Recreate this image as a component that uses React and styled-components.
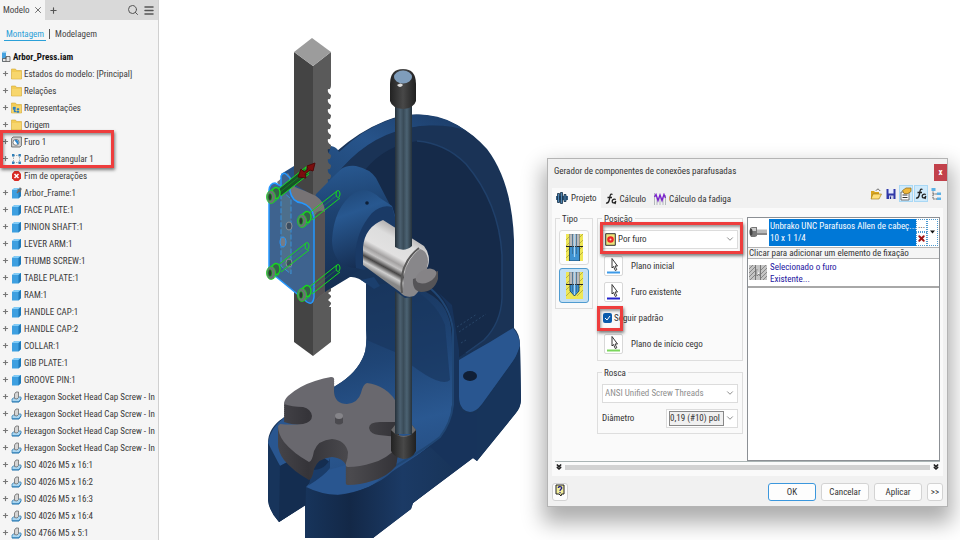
import styled, { createGlobalStyle } from "styled-components";
import { Search, Menu, Plus, X, ChevronDown, ChevronsDown } from "lucide-react";

const GlobalStyle = createGlobalStyle`
* { box-sizing: border-box; }
body {
  margin: 0;
  background-color: #fff;
  color: #333;
  font-family: "Roboto Condensed", "Open Sans Condensed", Roboto, sans-serif;
  font-size: 9px;
  line-height: 12px;
}
button, select, input { font: inherit; color: inherit; margin: 0; }
`;

const Page = styled.div`
display: flex;
align-items: stretch;
overflow: hidden;
`;

/* ---------- browser panel ---------- */

const Sidebar = styled.aside`
flex: 0 0 159px;
min-width: 0;
background-color: #f5f5f5;
border-right: 1px solid #d0d0d0;
overflow: hidden;
`;

const PanelHead = styled.div`
display: flex;
align-items: center;
height: 20px;
background-color: #d9d9d9;
color: #444;
`;

const PanelTab = styled.div`
display: flex;
align-items: center;
justify-content: space-between;
width: 45px;
height: 20px;
padding: 0 1px 0 3px;
background-color: #f5f5f5;
`;

const IconButton = styled.button`
display: flex;
align-items: center;
justify-content: center;
width: 12px;
height: 14px;
padding: 0;
border: none;
background: none;
color: #555;
`;

const AddButton = styled(IconButton)`
margin-left: 2px;
`;

const HeadTools = styled.div`
display: flex;
gap: 4px;
margin-left: auto;
padding-right: 3px;
`;

const Modes = styled.nav`
display: flex;
align-items: center;
height: 28px;
padding: 0 4px;
`;

const ModeLink = styled.a`
padding: 0 2px;
color: ${(p) => (p.$active ? "#2aa0d8" : "#444")};
border-bottom: 1px solid ${(p) => (p.$active ? "#2aa0d8" : "transparent")};
text-decoration: none;
`;

const Divider = styled.span`
width: 1px;
height: 10px;
margin: 0 3px;
background-color: #555;
`;

const Tree = styled.ul`
list-style: none;
margin: 0;
padding: 0;
`;

const TreeRow = styled.li`
display: flex;
align-items: center;
height: 17px;
padding-left: ${(p) => (p.$root ? 1 : 2)}px;
gap: 2px;
white-space: nowrap;
font-weight: ${(p) => (p.$root ? "bold" : "normal")};
color: ${(p) => (p.$root ? "#111" : "#3a3a3a")};
svg { flex: none; }
`;

const Expander = styled.span`
display: flex;
width: 7px;
color: #777;
`;

const Marked = styled.div`
position: relative;
`;

const RedBox = styled.span`
position: absolute;
top: ${(p) => p.$top}px;
left: ${(p) => p.$left}px;
width: ${(p) => p.$width}px;
height: ${(p) => p.$height}px;
border: 3px solid #ee3d3d;
box-shadow: 1px 2px 3px rgba(0, 0, 0, 0.5), inset 1px 2px 3px rgba(0, 0, 0, 0.4);
pointer-events: none;
`;

/* ---------- model view and dialog ---------- */

const Viewport = styled.main`
flex: 388 1 0;
min-width: 0;
svg { display: block; width: 100%; }
`;

const DialogSide = styled.div`
flex: 401 1 0;
min-width: 0;
padding: 158px 12px 31px 0;
`;

const Dialog = styled.section`
display: flex;
flex-direction: column;
height: 349px;
padding: 0 4px;
background-color: #f1f1f1;
border: 1px solid #b4b4b4;
box-shadow: 0 12px 20px 4px rgba(0, 0, 0, 0.32);
`;

const TitleBar = styled.header`
display: flex;
justify-content: space-between;
align-items: center;
height: 28px;
margin-right: -4px;
padding-left: 2px;
span { padding-bottom: 3px; }
`;

const CloseButton = styled.button`
width: 13px;
height: 17px;
padding: 0;
border: none;
background-color: #c2414b;
color: #fff;
font-weight: bold;
line-height: 12px;
`;

const TabStrip = styled.div`
display: flex;
align-items: flex-end;
height: 22px;
`;

const Tab = styled.button`
display: flex;
align-items: center;
gap: 3px;
height: ${(p) => (p.$active ? 20 : 18)}px;
padding: 0 4px;
border: none;
background-color: ${(p) => (p.$active ? "#fafafa" : "#f1f1f1")};
`;

const Tools = styled.div`
display: flex;
align-items: center;
gap: 1px;
margin-left: auto;
height: 22px;
padding-bottom: 6px;
`;

const Tool = styled.button`
display: flex;
align-items: center;
justify-content: center;
width: 14px;
height: 17px;
padding: 0;
border: 1px solid ${(p) => (p.$on ? "#a9d8f5" : "transparent")};
background-color: ${(p) => (p.$on ? "#cfeafb" : "transparent")};
`;

const Body = styled.div`
display: flex;
flex-direction: column;
height: 268px;
padding: 5px 3px 3px;
background-color: #fafafa;
`;

const Columns = styled.div`
display: grid;
grid-template-columns: 38px 146px minmax(0, 1fr);
column-gap: 4px;
height: 252px;
border-bottom: 1px solid #aab4b4;
`;

const Group = styled.fieldset`
min-width: 0;
margin: 0;
padding: 5px 4px 0;
border: 1px solid #dedede;
height: ${(p) => p.$height}px;
legend { padding: 0 2px; line-height: 12px; }
`;

const Settings = styled.div`
display: flex;
flex-direction: column;
gap: 6px;
`;

const TypeButton = styled.button`
display: flex;
align-items: center;
justify-content: center;
width: 30px;
height: 35px;
margin: 0 0 3px -1px;
padding: 0;
border: 1px solid ${(p) => (p.$on ? "#4f9bd0" : "#dcdcdc")};
border-radius: 3px;
background-color: ${(p) => (p.$on ? "#c3dff3" : "#fdfdfd")};
`;

const Combo = styled.div`
position: relative;
display: flex;
align-items: center;
gap: 2px;
width: ${(p) => (p.$width ? p.$width + "px" : "100%")};
height: 19px;
padding-left: 2px;
padding-right: ${(p) => (p.$boxed ? 13 : 0)}px;
border: 1px solid #dcdcdc;
background-color: #fff;
color: ${(p) => (p.$muted ? "#8f8f8f" : "#333")};
> svg:last-child { position: absolute; right: 2px; pointer-events: none; color: #777; }
select {
  flex: 1;
  min-width: 0;
  height: 15px;
  padding: 0;
  border: ${(p) => (p.$boxed ? "1px solid #888" : "none")};
  outline: none;
  appearance: none;
  background: ${(p) => (p.$boxed ? "#f0f0f0" : "transparent")};
  opacity: 1;
}
`;

const Field = styled.div`
display: flex;
align-items: center;
gap: 8px;
height: 20px;
margin-top: 6px;
padding-left: 2px;
`;

const PickButton = styled.button`
display: flex;
align-items: center;
justify-content: center;
width: 19px;
height: 20px;
padding: 0;
border: 1px solid #d8d8d8;
border-radius: 2px;
background-color: #fff;
`;

const Rows = styled.div`
padding-top: 1px;
`;

const CheckRow = styled.label`
position: relative;
display: flex;
align-items: center;
gap: 2px;
height: 20px;
margin-top: 6px;
padding-left: 1px;
input {
  appearance: none;
  width: 9px;
  height: 10px;
  border-radius: 2px;
  background-color: #0b5cad;
}
> svg { position: absolute; left: 2px; pointer-events: none; }
`;

const Pair = styled.div`
display: flex;
align-items: center;
justify-content: space-between;
margin-top: 6px;
`;

const PartList = styled.div`
height: 244px;
margin-top: 4px;
border: 1px solid #8b8f94;
background-color: #fff;
overflow: hidden;
`;

const Part = styled.div`
display: flex;
align-items: stretch;
height: 29px;
padding: 1px;
border-bottom: ${(p) => (p.$selected ? "none" : "2px solid #a8a8a8")};
`;

const PartIcon = styled.div`
display: flex;
align-items: center;
width: 20px;
`;

const PartText = styled.div`
flex: 1;
min-width: 0;
padding: 1px 0 1px 1px;
background-color: ${(p) => (p.$selected ? "#0078d7" : "#fff")};
color: ${(p) => (p.$selected ? "#fff" : "#1c14a0")};
white-space: nowrap;
`;

const PartButtons = styled.div`
display: flex;
flex-direction: column;
width: 11px;
button {
  display: flex;
  align-items: center;
  justify-content: center;
  flex: 1;
  min-height: 0;
  padding: 0;
  border: 1px dotted #4f9bd0;
  background: #fff;
  color: #111;
}
`;

const Hint = styled.div`
height: 12px;
padding-left: 1px;
border-top: 1px solid #b4b4b4;
border-bottom: 1px solid #b4b4b4;
background-color: #f5f5f5;
line-height: 10px;
white-space: nowrap;
`;

const Slide = styled.div`
display: flex;
align-items: center;
gap: 2px;
height: 11px;
color: #222;
span { flex: 1; height: 5px; background-color: #d2d2d2; }
`;

const Footer = styled.footer`
display: flex;
align-items: center;
gap: 5px;
height: 32px;
padding-top: 2px;
`;

const Button = styled.button`
width: ${(p) => (p.$small ? 16 : 48)}px;
height: 18px;
padding: 0;
border: 1px solid ${(p) => (p.$primary ? "#3b97dd" : "#d3d3d3")};
border-radius: 3px;
background-color: #fdfdfd;
&:first-of-type { margin-right: auto; }
`;

/* ---------- small icons ---------- */

const FolderIcon = ({ badge }) => (
  <svg width="11" height="12" viewBox="0 0 11 12">
    <path d="M.5 1h4l1 1.5h5V11H.5z" fill="#f3cc55" stroke="#d3a734" strokeWidth=".6" />
    <path d="M1 4h9v6.6H1z" fill="#f7d66d" />
    {badge && <path d="M2 5h2.5v2.5H2zM6 6.500h2V8H6zM6 9h2v1.500H6zM3 7v3h3" fill="#2d7fc1" stroke="#2d7fc1" strokeWidth=".4" />}
  </svg>
);

const PartCube = ({ pinned }) => (
  <svg width="11" height="12" viewBox="0 0 11 12">
    <path d="M1 3 3.500 1H10v8l-2.500 2.500H1z" fill="#3d9fe0" />
    <path d="M1 3 3.500 1H10L7.500 3z" fill="#82cbf6" />
    <path d="M7.500 3 10 1v8l-2.500 2.500z" fill="#1d78b8" />
    {pinned && <path d="M6 6 9 2.500M6.500 2.500l3.500 2M8.500.8l2 1.700" stroke="#6d6d6d" strokeWidth="1.500" />}
  </svg>
);

const ScrewIcon = () => (
  <svg width="11" height="12" viewBox="0 0 11 12">
    <path d="M1 8l3-2h6v2l-2 3H1z" fill="#a9d5f0" stroke="#3a83b5" strokeWidth=".8" />
    <path d="M3.500 7.500V3L5 1h2.500v5.500L6 8z" fill="#d5d5d5" stroke="#6c6c6c" strokeWidth=".8" />
    <path d="M1 10.800h7l2-3" fill="none" stroke="#2f7fb7" />
  </svg>
);

const HoleIcon = () => (
  <svg width="11" height="12" viewBox="0 0 11 12">
    <path d="M.6 2.500 2 1h8.400v8.500L9 11H.6z" fill="#d4d4d4" stroke="#555" strokeWidth=".8" />
    <circle cx="5" cy="6.300" r="3" fill="#fff" stroke="#666" strokeWidth=".8" />
    <path d="M5 6.300 3.500 4.500a2.500 2.500 0 1 1 3 4z" fill="#2b87cf" />
  </svg>
);

const PatternIcon = () => (
  <svg width="11" height="12" viewBox="0 0 11 12">
    <path d="M2.500 2.500h6v7h-6z" fill="none" stroke="#999" strokeDasharray="1.500 1" strokeWidth=".8" />
    <path d="M1 1h2.400v2.400H1zM7.500 1h2.400v2.400H7.500zM1 8.500h2.400v2.400H1zM7.500 8.500h2.400v2.400H7.500z" fill="#2f7fb9" />
  </svg>
);

const EndIcon = () => (
  <svg width="11" height="12" viewBox="0 0 11 12">
    <path d="M3.500 1h4L10 3.700v4.600L7.500 11h-4L1 8.300V3.700z" fill="#d92a25" />
    <path d="M3.500 4l4 4M7.500 4l-4 4" stroke="#fff" strokeWidth="1.500" />
  </svg>
);

const AssemblyIcon = () => (
  <svg width="10" height="12" viewBox="0 0 10 12">
    <path d="M1 1.500h4v9H1z" fill="#45a2df" />
    <path d="M1 1.500 2 .5h4l-1 1z" fill="#8fcff5" />
    <path d="M5 5.500h4v5H1.500v-3H5zM5 6v4.500" fill="#e4e4e4" stroke="#555" strokeWidth=".8" />
  </svg>
);

const BoltTabIcon = () => (
  <svg width="12" height="12" viewBox="0 0 12 12">
    <path d="M0 4h12v4H0z" fill="#355f86" />
    <path d="M1.500 1.500h2v9h-2zM4.500.5h2v11h-2zM8 2.500h2v7H8z" fill="#4f86b4" stroke="#132c42" strokeWidth=".8" />
  </svg>
);

const FormulaIcon = () => (
  <svg width="12" height="12" viewBox="0 0 12 12" fill="none" stroke="#222" strokeWidth="1.300">
    <path d="M7.500 1.500C5 0 5 3.500 4.500 6S3.500 10.500 1 10M2.500 4.500h4.500" />
    <path d="M10.800 6.500C8 5.500 6.800 7.500 7.300 9s3 1 3.500-1L10 11" />
  </svg>
);

const FatigueIcon = () => (
  <svg width="12" height="12" viewBox="0 0 12 12">
    <path d="M.5 0v12M3 5v7M6 5v7M9 5v7M11.500 2v10" stroke="#9aa0a5" strokeWidth=".7" />
    <path d="M.5 4 2 1.500 4 7.500 6 2l2 5.500L10 1.500 11.500 5" fill="none" stroke="#7a22cc" strokeWidth="1.400" />
  </svg>
);

const OpenIcon = () => (
  <svg width="12" height="12" viewBox="0 0 12 12">
    <path d="M1 3h3l1 1h4v7H1z" fill="#d9a520" />
    <path d="M3 6h8.500L9 11H1z" fill="#ffe07c" stroke="#9c7209" strokeWidth=".6" />
    <path d="M6 2.500C7.500.5 9 1 10 3" fill="none" stroke="#555" />
  </svg>
);

const SaveIcon = () => (
  <svg width="10" height="12" viewBox="0 0 10 12">
    <path d="M.5 1h9v10h-9z" fill="#3038a8" />
    <path d="M2.500 1h5v4.500h-5z" fill="#e6ecff" />
    <path d="M3 7.500h4.500V11H3z" fill="#c9cde8" />
    <path d="M4 8.500h1V11H4z" fill="#202880" />
  </svg>
);

const CardIcon = () => (
  <svg width="12" height="14" viewBox="0 0 12 14">
    <path d="M1 5h8v8H1z" fill="#fff" stroke="#666" strokeWidth=".9" />
    <path d="M2.500 8h5M2.500 10.500h5" stroke="#333" />
    <path d="M2.500 3.500 6 1h5v3.500L8 6.500H4z" fill="#f0b83c" stroke="#8a6512" strokeWidth=".7" />
  </svg>
);

const TreeIcon = () => (
  <svg width="11" height="14" viewBox="0 0 11 14">
    <path d="M2 3v9h5M2 7h5" fill="none" stroke="#555" strokeDasharray="1.500 .8" />
    <path d="M.5 1h4v3h-4zM6 5.500h4v2.500H6zM6 10.500h4v2.500H6z" fill="#5cb1e6" />
  </svg>
);

const HoleSection = ({ blind }) => (
  <svg width="17" height="27" viewBox="0 0 17 27">
    <path d="M0 0h17v27H0z" fill="#efe756" />
    <path d="M0 6 6 0M0 12 6 6M0 18l6-6M0 24l6-6M11 6l6-6M11 12l6-6M11 18l6-6M11 24l6-6" stroke="#a59c30" strokeWidth=".7" />
    <path d="M3.500 0h10v12.500h-10z" fill="#b9b9bb" stroke="#777" strokeWidth=".6" />
    <path d={blind ? "M4 12.500h9V19l-4.500 5L4 19z" : "M3.500 12.500h10V27h-10z"} fill="#3f93d2" stroke="#123a5e" strokeWidth=".8" />
    <path d="M0 12.500h17" stroke="#222" />
    <path d="M6.500 0v20M10.500 0v20" stroke="#39688e" strokeWidth=".8" />
    <path d="M8.500 0v23" stroke="#a9d6f2" strokeWidth="1.200" />
  </svg>
);

const HoleTarget = () => (
  <svg width="11" height="13" viewBox="0 0 11 13">
    <path d="M.7.7h9.600v11.600H.7z" fill="#ece47a" stroke="#333" />
    <circle cx="5.500" cy="6.500" r="3.300" fill="#ee2525" />
    <circle cx="5.500" cy="6.500" r="1" fill="#ffc9c9" />
  </svg>
);

const Pick = ({ color }) => (
  <svg width="15" height="17" viewBox="0 0 15 17">
    <path d="M6 1.500v9.500L7.500 9.500l1.800 4 1.500-.8-1.800-3.700h2.500z" fill="#fff" stroke="#222" strokeWidth=".9" />
    <path d="M1 15.500h13" stroke={color} strokeWidth="2" />
  </svg>
);

const ScrewPhoto = () => (
  <svg width="18" height="14" viewBox="0 0 18 14">
    <path d="M6 4.500h12v5.500H6z" fill="#b8b8b8" />
    <path d="M6 8h12v2H6z" fill="#888" />
    <path d="M1 3 3 2h5v9l-2 1H2L1 10z" fill="#777" />
    <path d="M2 3h5v3H2z" fill="#ccc" />
    <ellipse cx="2" cy="7" rx="1.500" ry="3.500" fill="#444" />
  </svg>
);

const HatchPhoto = () => (
  <svg width="18" height="15" viewBox="0 0 18 15">
    <path d="M0 0h18v15H0z" fill="#c4c4c4" />
    <path d="M0 4 4 0M0 8l6-6M0 12l6-6M1 15l5-5M12 5l5-5M12 9l6-6M12 13l6-6M14 15l4-4" stroke="#777" strokeWidth=".8" />
    <path d="M6.500 0v15M11.500 0v15" stroke="#777" />
    <path d="M8 4v7l2-2 1 2" fill="#fff" stroke="#666" strokeWidth=".7" />
  </svg>
);

const CaretIcon = () => (
  <svg width="5" height="4" viewBox="0 0 5 4"><path d="M0 .5h5L2.500 3.500z" fill="#111" /></svg>
);

const HelpIcon = () => (
  <svg width="10" height="13" viewBox="0 0 10 13">
    <path d="M1 1h8v9H6.500L6 12 4 10H1z" fill="#f3ee9a" stroke="#222" />
    <path d="M3.300 4C3.300 2 7 2 6.700 4.200 6.500 5.500 5 5.300 5 7M5 8v1.300" fill="none" stroke="#20208c" strokeWidth="1.300" />
  </svg>
);

/* ---------- arbor press ---------- */

const DISC =
  "M280 424Q291 425 303 424 312 422 312 416 311 409 303 407 292 407 284 404 284 400 288 396 299 386 315 381 324 378 331 377 335 377 334 381V392Q335 404 347 404 358 403 361 393 363 384 367 383 376 384 384 389 394 395 399 408V422H380Q369 422 369 428 370 434 379 435L398 437 396 448Q387 459 372 463 360 467 348 467 345 467 346 463 348 458 348 452 345 440 332 439 318 440 314 451 312 462 309 462 293 453 284 442 278 434 278 426Z";

const TEETH = Array.from({ length: 10 }, (_, i) => `Q331 ${90 + i * 10} 328 ${89 + i * 10}Q327 ${93 + i * 10} 331 ${95 + i * 10}`).join("");

const Bolt = ({ x, y }) => (
  <g fill="none" stroke="#16dc1c">
    <path d={`M${x + 4} ${y - 6}L${x + 33} ${y - 29}M${x + 8} ${y}L${x + 36} ${y - 22}`} />
    <path d={`M${x + 6} ${y - 3}L${x + 32} ${y - 24}`} strokeWidth=".5" opacity=".6" />
    <ellipse cx={x + 34} cy={y - 26} rx="2" ry="3.500" />
    <ellipse cx={x + 3} cy={y - 3} rx="4" ry="5.500" fill="#35634a" strokeWidth="1.400" />
    <ellipse cx={x - 2} cy={y + 1} rx="4.500" ry="6.500" fill="#6a7272" strokeWidth=".8" />
    <ellipse cx={x - 3} cy={y + 1} rx="2" ry="3.500" fill="#2d3434" strokeWidth=".6" />
    <path d={`M${x - 2} ${y - 6}L${x + 3} ${y - 9}M${x} ${y + 7}L${x + 6} ${y + 2}`} strokeWidth=".8" />
  </g>
);

function ArborPress() {
  return (
    <svg viewBox="159 0 388 538" role="img" aria-label="Arbor press">
      <defs>
        <linearGradient id="shaft">
          <stop offset="0" stopColor="#253039" />
          <stop offset=".3" stopColor="#4b6070" />
          <stop offset=".5" stopColor="#3a4c59" />
          <stop offset=".7" stopColor="#4c6373" />
          <stop offset="1" stopColor="#26323b" />
        </linearGradient>
        <linearGradient id="cap">
          <stop offset="0" stopColor="#222" />
          <stop offset=".5" stopColor="#484848" />
          <stop offset="1" stopColor="#202020" />
        </linearGradient>
        <linearGradient id="rim" x1="0" y1="1" x2="1" y2="0">
          <stop offset="0" stopColor="#1f4674" />
          <stop offset=".5" stopColor="#27548b" />
          <stop offset="1" stopColor="#1b3b66" />
        </linearGradient>
        <linearGradient id="floor" x1=".3" y1="0" x2=".5" y2="1">
          <stop offset="0" stopColor="#18345a" />
          <stop offset=".4" stopColor="#1f4576" />
          <stop offset=".7" stopColor="#2a5891" />
          <stop offset="1" stopColor="#23497c" />
        </linearGradient>
        <linearGradient id="boss" x1="0" y1="0" x2=".3" y2="1">
          <stop offset="0" stopColor="#1e4574" />
          <stop offset=".35" stopColor="#285890" />
          <stop offset="1" stopColor="#162f54" />
        </linearGradient>
        <linearGradient id="arm" x1=".4" y1="0" x2=".5" y2="1">
          <stop offset="0" stopColor="#285890" />
          <stop offset=".35" stopColor="#1d4270" />
          <stop offset="1" stopColor="#152d50" />
        </linearGradient>
        <linearGradient id="pillar">
          <stop offset="0" stopColor="#17345b" />
          <stop offset=".3" stopColor="#132847" />
          <stop offset=".65" stopColor="#1b3a65" />
          <stop offset="1" stopColor="#183459" />
        </linearGradient>
        <linearGradient id="chrome" gradientUnits="userSpaceOnUse" x1="404" y1="232" x2="380" y2="276">
          <stop offset="0" stopColor="#b5b3b3" />
          <stop offset=".2" stopColor="#dddddd" />
          <stop offset=".5" stopColor="#e2e1e1" />
          <stop offset=".62" stopColor="#a3a1a1" />
          <stop offset=".7" stopColor="#c4c3c3" />
          <stop offset=".8" stopColor="#464545" />
          <stop offset=".9" stopColor="#d0d0d0" />
          <stop offset="1" stopColor="#888" />
        </linearGradient>
        <linearGradient id="side">
          <stop offset="0" stopColor="#454449" />
          <stop offset=".25" stopColor="#353439" />
          <stop offset=".6" stopColor="#4b4a4e" />
          <stop offset="1" stopColor="#333237" />
        </linearGradient>
      </defs>

      {/* frame */}
      <path d="M325 147Q334 145 337 151 360 131 385 121 405 113 424 115 460 119 487 149 512 182 514 240V328Q520 334 520 345L521 400Q521 407 516 413L477 461 473 458 413 503 411 509 373 538H305V505L279 522Q269 511 268 500V443Q268 428 283 418L337 385Q357 373 364 355 367 348 367 330V284Q357 276 350 277L325 292 312 297V193L322 146Z" fill="#183459" />
      <path d="M331 146Q337 147 339 152 363 129 389 120 409 113 427 115 448 117 466 131 444 125 423 126 400 128 379 140 358 151 342 168L322 190 316 192Z" fill="url(#rim)" />
      <path d="M342 168Q373 132 420 126 450 124 466 131 480 141 488 152 510 183 513 238V330L459 358Q459 322 440 305L412 290Q376 270 355 215Z" fill="#1a3356" />
      <path d="M365 170Q385 145 418 141 445 143 466 164 499 203 502 255V298Q502 323 484 340L455 360 415 300 370 260Z" fill="#152a49" />
      <path d="M417 141Q445 143 466 164 499 203 502 255V298Q501 323 484 340L466 353" fill="none" stroke="#20406a" strokeWidth="1.500" />
      <path d="M366 284H400Q440 291 448 316 452 325 452 345V405Q451 424 440 437 423 453 385 479L337 500 306 488V440L283 418 337 385Q357 373 364 355 367 348 366 330Z" fill="url(#floor)" />
      <path d="M366 284H402Q435 298 445 325L450 380Q440 390 395 352 378 345 367 340Z" fill="#18365e" opacity=".65" />
      <path d="M430 285Q449 300 453 325V405Q450 425 440 437 420 455 393 472L373 538 413 503 473 458 477 461V412Q458 418 459 400V350L452 305Z" fill="#17335b" />
      <path d="M395 466Q425 449 440 437 451 423 453 405V330Q450 305 430 288" fill="none" stroke="#204674" strokeWidth="2" />
      <path d="M459 360Q474 351 490 342L513 328Q520 336 520 346 519 352 513 361L482 404Q472 417 463 409 459 404 459 397Z" fill="#295690" />
      <path d="M520 346 521 400Q520 408 515 414L477 461V412L515 359Z" fill="#17345b" />
      <ellipse cx="470" cy="376" rx="7" ry="5" fill="#101f36" />
      <path d="M457 327l20-13M459 332l27-18M461 343l5-3" stroke="#284669" strokeDasharray="2 2" />

      {/* base */}
      <path d="M268 443Q270 428 285 417L320 430 310 480 280 466Z" fill="#295690" />
      <path d="M268 443Q272 457 280 466L305 452V505L279 522Q269 511 268 500Z" fill="#17345b" />
      <path d="M280 466 312 450 330 462 306 487V505L279 522Z" fill="#142d50" />
      <path d="M307 487 328 470 400 450Q387 477 369 487 341 498 318 493Z" fill="#295690" />
      <path d="M312 470Q326 470 330 458V468Q324 476 309 485Z" fill="#1a3c69" />
      <path d="M306 487Q320 494 338 495 371 491 393 471L430 447 455 470 413 503 411 509 373 538H305Z" fill="url(#pillar)" />

      {/* table plate */}
      {[18, 16, 14, 12, 10, 8, 6, 4, 2].map((dy) => (
        <path key={dy} d={DISC} fill="url(#side)" transform={`translate(0 ${dy})`} />
      ))}
      <path d={DISC} fill="#69686e" />
      <path d="M335 416v7q4 3 8 0v-7z" fill="#4b4a4f" />
      <ellipse cx="339" cy="416" rx="4" ry="3" fill="#858489" />

      {/* ram */}
      <path d="M294 52 313 66V356L294 342Z" fill="#444444" />
      <path d={`M313 66 331 52V85${TEETH}V342L313 356Z`} fill="#5a5a5a" />
      <path d="M294 52 312 38 331 52 313 66Z" fill="#9c9c9c" />
      <path d="M333 290l-5 3q4 3 3 4l-3 3q4 3 3 4l-2 3h5z" fill="#fff" />

      {/* head */}
      <path d="M316 194 322 188 340 170Q346 165 356 166 370 169 376 178L390 205 365 267 345 279 325 292H313V205Z" fill="url(#arm)" />
      <path d="M281 174 294 166V184L310 194 318 198V205L287 190Z" fill="#275083" />
      <path d="M332 240Q334 207 354 193 366 185 380 198L392 206 398 225 364 268Q346 270 338 260 332 252 332 240Z" fill="url(#boss)" />
      <path d="M356 268Q352 236 372 213 382 204 392 207L400 235 364 270Z" fill="#1a3a66" />
      <circle cx="367" cy="203" r="1.800" fill="#0e2038" />
      <path d="M374 277l6 9-6 3-13-9" fill="#1b3f6d" />

      {/* pinion shaft */}
      <path d="M363 247Q365 227 383 220L424 246Q431 255 428 266L411 296Q405 298 400 292L363 265Z" fill="url(#chrome)" />
      <path d="M404 294Q400 264 420 249 428 251 428 262 425 287 414 296 407 298 404 294Z" fill="#88878a" />
      <path d="M402 293Q398 264 419 248" fill="none" stroke="#5b5a5a" strokeWidth="2" />
      <path d="M413 279q-1 12 8 13 13 0 17-13v-8z" fill="#555457" />
      <ellipse cx="426" cy="276" rx="11" ry="6.500" fill="#858386" transform="rotate(-24 426 276)" />

      {/* lever arm */}
      <path d="M395 106H412V246Q404 253 395 247Z" fill="url(#shaft)" />
      <path d="M395 291 405 298 412 297V434H395Z" fill="url(#shaft)" />
      <path d="M390 84Q390 69 403 69 416 69 416 84V101Q414 108 403 109 392 108 390 101Z" fill="url(#cap)" />
      <ellipse cx="403" cy="77" rx="9" ry="6.500" fill="#7f9dbb" />
      <path d="M397 85q4-3 6 0-3 4-6 0" fill="#ddd" />
      <path d="M391 430 395 425V434Q404 438 412 434V425L416 430V451Q412 459 403 459 394 457 391 451Z" fill="url(#cap)" />
      <path d="M391 430 395 425V434Q404 438 412 434V425L416 430Q404 444 391 430Z" fill="#69696b" />

      {/* face plate */}
      <path d="M277 182 288 173Q293 180 295 187 306 191 316 196 325 202 325 212V292L312 303 290 205Z" fill="#777375" />
      <path d="M314 217Q318 208 325 212V292L312 303Z" fill="#575355" />
      <path d="M269 190Q270 183 275 183L281 186V176Q283 172 286 174L290 178V191Q292 202 302 203 312 206 314 217V297Q313 306 307 302L269 271Z" fill="#3e638f" stroke="#2598ff" strokeWidth="1.500" />
      <path d="M281 190 291 199V274L281 266Z" fill="#4d6f8c" stroke="#3992da" strokeDasharray="5 2" />
      <ellipse cx="283" cy="242" rx="3" ry="5" fill="#777c85" stroke="#2598ff" />
      <ellipse cx="289" cy="226" rx="3" ry="4" fill="#3b4d60" stroke="#8a9198" />
      <ellipse cx="289" cy="263" rx="3" ry="4" fill="#3b4d60" stroke="#8a9198" />

      <path d="M278 190 305 168 309 174 281 196Z" fill="#175427" />
      <Bolt x={273} y={196} />
      <Bolt x={304} y={220} />
      <Bolt x={273} y={272} />
      <Bolt x={304} y={294} />
      <path d="M298 177 301 169 304 172 308 169 307 166 315 163 313 171 310 170 305 174 306 178Z" fill="#7b0e0e" stroke="#510808" />
    </svg>
  );
}

/* ---------- data ---------- */

const features = [
  [FolderIcon, "Estados do modelo: [Principal]"],
  [FolderIcon, "Relações"],
  [FolderIcon, "Representações", { badge: true }],
  [FolderIcon, "Origem"],
];

const marked = [
  [HoleIcon, "Furo 1"],
  [PatternIcon, "Padrão retangular 1"],
];

const parts = [
  "FACE PLATE:1", "PINION SHAFT:1", "LEVER ARM:1", "THUMB SCREW:1", "TABLE PLATE:1", "RAM:1",
  "HANDLE CAP:1", "HANDLE CAP:2", "COLLAR:1", "GIB PLATE:1", "GROOVE PIN:1",
];

const screws = [
  "Hexagon Socket Head Cap Screw - In",
  "Hexagon Socket Head Cap Screw - In",
  "Hexagon Socket Head Cap Screw - In",
  "Hexagon Socket Head Cap Screw - In",
  "ISO 4026 M5 x 16:1", "ISO 4026 M5 x 16:2", "ISO 4026 M5 x 16:3", "ISO 4026 M5 x 16:4", "ISO 4766 M5 x 5:1",
];

function Item({ icon: Icon, text, leaf, iconProps }) {
  return (
    <TreeRow>
      <Expander>{!leaf && <Plus size={7} strokeWidth={4} />}</Expander>
      <Icon {...iconProps} />
      {text}
    </TreeRow>
  );
}

function PickField({ label, color }) {
  const id = "pick-" + label.replaceAll(" ", "-");
  return (
    <Field>
      <PickButton id={id} type="button"><Pick color={color} /></PickButton>
      <label htmlFor={id}>{label}</label>
    </Field>
  );
}

function Browser() {
  return (
    <Sidebar>
      <PanelHead>
        <PanelTab>Modelo<IconButton aria-label="Fechar"><X size={10} /></IconButton></PanelTab>
        <AddButton aria-label="Adicionar"><Plus size={9} strokeWidth={3} /></AddButton>
        <HeadTools>
          <IconButton aria-label="Pesquisar"><Search size={12} /></IconButton>
          <IconButton aria-label="Menu"><Menu size={13} strokeWidth={3} /></IconButton>
        </HeadTools>
      </PanelHead>
      <Modes>
        <ModeLink href="#montagem" $active>Montagem</ModeLink>
        <Divider />
        <ModeLink href="#modelagem">Modelagem</ModeLink>
      </Modes>
      <Tree>
        <TreeRow $root><AssemblyIcon />Arbor_Press.iam</TreeRow>
        {features.map(([icon, text, iconProps]) => <Item key={text} icon={icon} text={text} iconProps={iconProps} />)}
        <Marked as="li">
          <Tree>
            {marked.map(([icon, text]) => <Item key={text} icon={icon} text={text} />)}
          </Tree>
          <RedBox $top={-3} $left={0} $width={114} $height={38} />
        </Marked>
        <Item icon={EndIcon} text="Fim de operações" leaf />
        <Item icon={PartCube} text="Arbor_Frame:1" iconProps={{ pinned: true }} />
        {parts.map((text) => <Item key={text} icon={PartCube} text={text} />)}
        {screws.map((text, i) => <Item key={i} icon={ScrewIcon} text={text} />)}
      </Tree>
    </Sidebar>
  );
}

function BoltDialog() {
  return (
    <Dialog role="dialog" aria-labelledby="dialog-title">
      <TitleBar>
        <span id="dialog-title">Gerador de componentes de conexões parafusadas</span>
        <CloseButton aria-label="Fechar">x</CloseButton>
      </TitleBar>
      <TabStrip>
        <Tab $active><BoltTabIcon />Projeto</Tab>
        <Tab><FormulaIcon />Cálculo</Tab>
        <Tab><FatigueIcon />Cálculo da fadiga</Tab>
        <Tools>
          <Tool aria-label="Abrir"><OpenIcon /></Tool>
          <Tool aria-label="Salvar"><SaveIcon /></Tool>
          <Tool aria-label="Nomes" $on><CardIcon /></Tool>
          <Tool aria-label="Fórmulas" $on><FormulaIcon /></Tool>
          <Tool aria-label="Árvore"><TreeIcon /></Tool>
        </Tools>
      </TabStrip>
      <Body>
        <Columns>
          <Group $height={96}>
            <legend>Tipo</legend>
            <TypeButton aria-label="Passante"><HoleSection /></TypeButton>
            <TypeButton aria-label="Cego" $on><HoleSection blind /></TypeButton>
          </Group>
          <Settings>
            <Group $height={148}>
              <legend>Posição</legend>
              <Marked>
                <Combo>
                  <HoleTarget />
                  <select aria-label="Posição" defaultValue="furo"><option value="furo">Por furo</option></select>
                  <ChevronDown size={10} />
                </Combo>
                <RedBox $top={-8} $left={-2} $width={143} $height={32} />
              </Marked>
              <Rows>
                <PickField label="Plano inicial" color="#3d9ae8" />
                <PickField label="Furo existente" color="#2222cc" />
                <CheckRow>
                  <input type="checkbox" defaultChecked />
                  <svg width="7" height="8" viewBox="0 0 7 8"><path d="M1 4l2 2 3-4" fill="none" stroke="#fff" /></svg>
                  Seguir padrão
                  <RedBox $top={-2} $left={-5} $width={26} $height={25} />
                </CheckRow>
                <PickField label="Plano de início cego" color="#7bd65c" />
              </Rows>
            </Group>
            <Group $height={67}>
              <legend>Rosca</legend>
              <Combo $muted>
                <select aria-label="Rosca" disabled><option>ANSI Unified Screw Threads</option></select>
                <ChevronDown size={10} />
              </Combo>
              <Pair>
                <label htmlFor="diametro">Diâmetro</label>
                <Combo $width={72} $boxed>
                  <select id="diametro"><option>0,19 (#10) pol</option></select>
                  <ChevronDown size={10} />
                </Combo>
              </Pair>
            </Group>
          </Settings>
          <PartList>
            <Part $selected>
              <PartIcon><ScrewPhoto /></PartIcon>
              <PartText $selected>
                <div>Unbrako UNC Parafusos Allen de cabeç...</div>
                <div>10 x 1 1/4</div>
              </PartText>
              <PartButtons>
                <button aria-label="Mais">...</button>
                <button aria-label="Remover"><X size={9} strokeWidth={5} color="#a01515" /></button>
              </PartButtons>
              <PartButtons><button aria-label="Opções"><CaretIcon /></button></PartButtons>
            </Part>
            <Hint>Clicar para adicionar um elemento de fixação</Hint>
            <Part>
              <PartIcon><HatchPhoto /></PartIcon>
              <PartText>
                <div>Selecionado o furo</div>
                <div>Existente...</div>
              </PartText>
            </Part>
          </PartList>
        </Columns>
        <Slide><ChevronsDown size={8} strokeWidth={5} /><span /><ChevronsDown size={8} strokeWidth={5} /></Slide>
      </Body>
      <Footer>
        <Button $small aria-label="Ajuda"><HelpIcon /></Button>
        <Button $primary>OK</Button>
        <Button>Cancelar</Button>
        <Button>Aplicar</Button>
        <Button $small>&gt;&gt;</Button>
      </Footer>
    </Dialog>
  );
}

function App() {
  return (
    <>
      <GlobalStyle />
      <Page>
        <Browser />
        <Viewport><ArborPress /></Viewport>
        <DialogSide><BoltDialog /></DialogSide>
      </Page>
    </>
  );
}

export default App;
